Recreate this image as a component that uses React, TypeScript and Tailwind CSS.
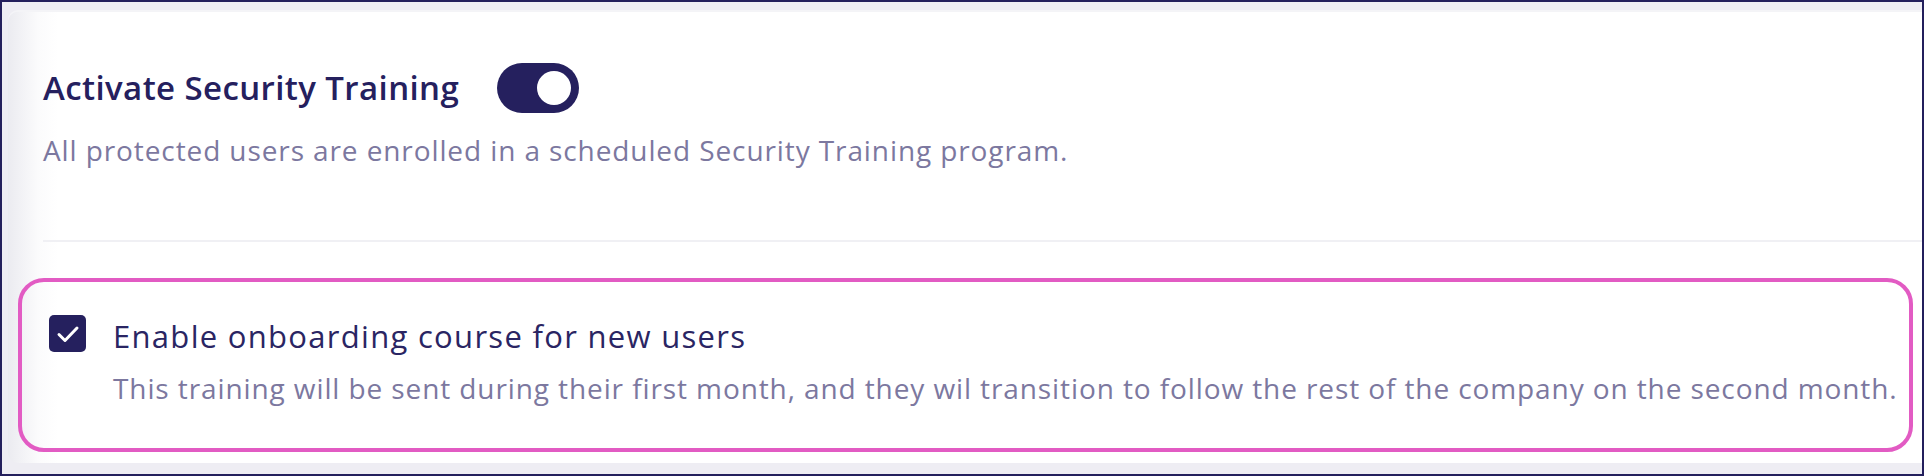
import React from 'react';

const Toggle: React.FC<{ on: boolean }> = ({ on }) => (
  <div
    className={`flex h-[50px] w-[82px] items-center rounded-full px-[8px] ${
      on ? 'justify-end bg-[#25205e]' : 'justify-start bg-[#d4d3e0]'
    }`}
  >
    <div className="h-[34px] w-[34px] rounded-full bg-white" />
  </div>
);

const Checkbox: React.FC<{ checked: boolean }> = ({ checked }) => (
  <div className="flex h-[37px] w-[37px] shrink-0 items-center justify-center rounded-[5px] bg-[#25205e]">
    {checked && (
      <svg width="24" height="24" viewBox="0 0 24 24" fill="none">
        <path d="M3 12.5l6 6L21 6" stroke="white" strokeWidth="3" strokeLinecap="round" strokeLinejoin="round" />
      </svg>
    )}
  </div>
);

const App: React.FC = () => {
  return (
    <div className="h-[476px] w-[1924px] bg-[#231f5c] p-[2px] font-['Open_Sans',sans-serif]">
      <div className="flex h-full flex-col bg-[#eeedf3] pb-[11px] pl-[6px] pt-[10px]">
        <div className="flex-1 rounded-l-[10px] bg-[linear-gradient(to_right,#ebebf0,#fbfbfc_30px,#ffffff_50px)] shadow-[0_-2px_0_#f4f4f7]">
          {/* Activate security training */}
          <div className="pl-[35px] pt-[51px]">
            <div className="flex items-center gap-[38px]">
              <h3 className="text-[33px] font-semibold leading-[38px] tracking-[0.4px] text-[#25205e]">
                Activate Security Training
              </h3>
              <Toggle on />
            </div>
            <p className="mt-[21px] text-[28px] leading-[32px] tracking-[0.9px] text-[#7c789f]">
              All protected users are enrolled in a scheduled Security Training program.
            </p>
          </div>

          <div className="ml-[35px] mt-[74px] h-[2px] bg-[#f0f0f4]" />

          {/* Onboarding option (highlighted) */}
          <div className="ml-[10px] mr-[9px] mt-[36px] flex gap-[27px] rounded-[26px] border-[4px] border-[#e25bc3] pb-[44px] pl-[27px] pt-[33px]">
            <Checkbox checked />
            <div className="pt-[3px]">
              <div className="text-[31px] leading-[36px] tracking-[1.3px] text-[#2a2563]">
                Enable onboarding course for new users
              </div>
              <p className="mt-[18px] text-[28px] leading-[32px] tracking-[0.9px] text-[#7c789f]">
                This training will be sent during their first month, and they wil transition to follow the rest of the company on the second month.
              </p>
            </div>
          </div>
        </div>
      </div>
    </div>
  );
};

export default App;
